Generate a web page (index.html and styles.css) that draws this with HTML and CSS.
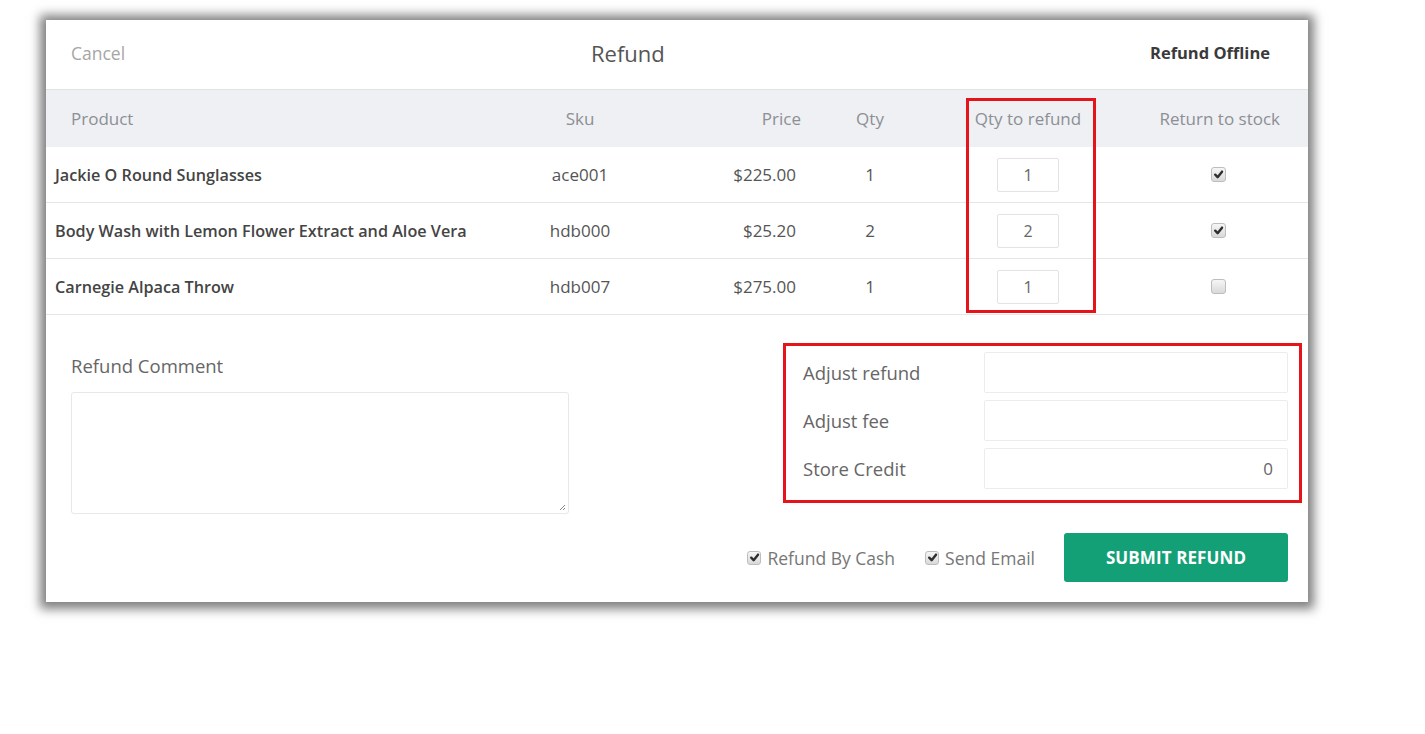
FILE: index.html
```html
<!DOCTYPE html>
<html lang="en">
<head>
<meta charset="utf-8">
<title>Refund</title>
<link rel="stylesheet" href="styles.css">
</head>
<body>
<div class="page">
  <div class="modal">
    <div class="modal-header">
      <span class="cancel">Cancel</span>
      <span class="title">Refund</span>
      <span class="offline">Refund Offline</span>
    </div>

    <div class="items">
      <div class="row head">
        <div class="c-product">Product</div>
        <div class="c-sku">Sku</div>
        <div class="c-price">Price</div>
        <div class="c-qty">Qty</div>
        <div class="c-refund">Qty to refund</div>
        <div class="c-stock">Return to stock</div>
      </div>
      <div class="row">
        <div class="c-product name">Jackie O Round Sunglasses</div>
        <div class="c-sku">ace001</div>
        <div class="c-price">$225.00</div>
        <div class="c-qty">1</div>
        <div class="c-refund"><span class="qty-input">1</span></div>
        <div class="c-stock"><span class="check on"><svg viewBox="0 0 10 10"><path d="M2 5.2 L4.2 7.4 L8.2 2.4"/></svg></span></div>
      </div>
      <div class="row">
        <div class="c-product name">Body Wash with Lemon Flower Extract and Aloe Vera</div>
        <div class="c-sku">hdb000</div>
        <div class="c-price">$25.20</div>
        <div class="c-qty">2</div>
        <div class="c-refund"><span class="qty-input">2</span></div>
        <div class="c-stock"><span class="check on"><svg viewBox="0 0 10 10"><path d="M2 5.2 L4.2 7.4 L8.2 2.4"/></svg></span></div>
      </div>
      <div class="row">
        <div class="c-product name">Carnegie Alpaca Throw</div>
        <div class="c-sku">hdb007</div>
        <div class="c-price">$275.00</div>
        <div class="c-qty">1</div>
        <div class="c-refund"><span class="qty-input">1</span></div>
        <div class="c-stock"><span class="check"></span></div>
      </div>
      <div class="highlight hl-qty"></div>
    </div>

    <div class="bottom">
      <div class="comment">
        <div class="comment-label">Refund Comment</div>
        <div class="textarea"><svg class="grip" viewBox="0 0 8 8"><path d="M7 2 L2 7 M7 5 L5 7"/></svg></div>
      </div>
      <div class="summary">
        <div class="adjust">
          <div class="adj-label">Adjust refund</div>
          <div class="adj-input"></div>
          <div class="adj-label">Adjust fee</div>
          <div class="adj-input"></div>
          <div class="adj-label">Store Credit</div>
          <div class="adj-input">0</div>
          <div class="highlight hl-adjust"></div>
        </div>
        <div class="actions">
          <span class="opt"><span class="check small on"><svg viewBox="0 0 10 10"><path d="M2 5.2 L4.2 7.4 L8.2 2.4"/></svg></span>Refund By Cash</span>
          <span class="opt"><span class="check small on"><svg viewBox="0 0 10 10"><path d="M2 5.2 L4.2 7.4 L8.2 2.4"/></svg></span>Send Email</span>
          <button class="submit">SUBMIT REFUND</button>
        </div>
      </div>
    </div>
  </div>
</div>
</body>
</html>
```

FILE: styles.css
```css
* { box-sizing: border-box; }

html, body {
  margin: 0;
  background: #ffffff;
}

body {
  font-family: "Open Sans", "Noto Sans", "Liberation Sans", sans-serif;
  color: #555;
  min-height: 734px;
}

.page {
  padding: 20px 0 60px 46px;
}

.modal {
  width: 1262px;
  height: 582px;
  background: #fff;
  box-shadow: 0 1px 10px 6px rgba(0, 0, 0, 0.5);
}

/* header */
.modal-header {
  height: 70px;
  display: flex;
  align-items: center;
  padding: 0 38px 4px 25px;
  border-bottom: 1px solid #e2e2e2;
}

.cancel {
  width: 520px;
  font-size: 17.5px;
  color: #a6a6a6;
}

.title {
  font-size: 22px;
  color: #555;
}

.offline {
  margin-left: auto;
  font-size: 16.5px;
  font-weight: 700;
  color: #3a3a3a;
}

/* table */
.items {
  position: relative;
}

.row {
  display: grid;
  grid-template-columns: 454px 160px 160px 100px 200px 188px;
  height: 56px;
  align-items: center;
  border-bottom: 1px solid #e6e6e6;
  font-size: 17px;
  color: #555;
}

.row.head {
  height: 57px;
  background: #eff0f3;
  border-bottom: none;
  font-size: 17px;
  color: #8c8f94;
}

.c-product { padding-left: 9px; white-space: nowrap; }
.head .c-product { padding-left: 25px; }
.name {
  font-weight: 600;
  color: #444;
  font-size: 16.2px;
}
.c-sku { text-align: center; white-space: nowrap; }
.c-price { text-align: right; padding-right: 24px; white-space: nowrap; }
.head .c-price { padding-right: 19px; }
.c-qty { text-align: center; }
.c-refund {
  display: flex;
  justify-content: center;
  padding-left: 16px;
  white-space: nowrap;
}
.c-stock {
  display: flex;
  justify-content: center;
  padding-left: 8px;
}
.head .c-stock {
  justify-content: flex-end;
  padding-right: 28px;
  white-space: nowrap;
}

.qty-input {
  width: 62px;
  height: 34px;
  border: 1px solid #e3e3e3;
  border-radius: 2px;
  display: flex;
  align-items: center;
  justify-content: center;
  font-size: 16px;
  color: #666;
}

.check {
  width: 15px;
  height: 15px;
  border: 1px solid #bdbdbd;
  border-radius: 3px;
  background: linear-gradient(#f6f6f6, #d9d9d9);
  display: inline-flex;
  align-items: center;
  justify-content: center;
}
.check svg {
  width: 11px;
  height: 11px;
  fill: none;
  stroke: #2f2f2f;
  stroke-width: 2.2;
  stroke-linecap: round;
  stroke-linejoin: round;
}
.check.small {
  width: 14px;
  height: 14px;
}

.highlight {
  position: absolute;
  border: 3px solid #e4141a;
  pointer-events: none;
}
.hl-qty {
  left: 920px;
  top: 8px;
  width: 130px;
  height: 215px;
}

/* bottom */
.bottom {
  display: flex;
  justify-content: space-between;
  padding: 37px 20px 0 25px;
}

.comment {
  width: 498px;
  padding-top: 2px;
}

.comment-label {
  font-size: 18.5px;
  color: #666;
  line-height: 24px;
}

.textarea {
  margin-top: 14px;
  height: 122px;
  border: 1px solid #e8e8e8;
  border-radius: 3px;
  position: relative;
}
.grip {
  position: absolute;
  right: 2px;
  bottom: 2px;
  width: 8px;
  height: 8px;
  fill: none;
  stroke: #888;
  stroke-width: 1;
}

.summary {
  display: flex;
  flex-direction: column;
  align-items: flex-end;
}

.adjust {
  position: relative;
  width: 485px;
  display: grid;
  grid-template-columns: 181px 304px;
  row-gap: 7px;
  align-items: center;
}

.adj-label {
  font-size: 18.5px;
  color: #666;
}

.adj-input {
  height: 41px;
  border: 1px solid #ececec;
  border-radius: 2px;
  display: flex;
  align-items: center;
  justify-content: flex-end;
  padding-right: 14px;
  font-size: 17px;
  color: #666;
}

.hl-adjust {
  top: -9px;
  left: -20px;
  right: -14px;
  bottom: -14px;
}

.actions {
  margin-top: 44px;
  display: flex;
  align-items: center;
}

.opt {
  display: inline-flex;
  align-items: center;
  gap: 6px;
  font-size: 17.5px;
  color: #777;
  margin-right: 30px;
}
.opt + .opt { margin-right: 29px; }

.submit {
  width: 224px;
  height: 49px;
  border: none;
  border-radius: 3px;
  background: #14a077;
  color: #fff;
  font-family: inherit;
  font-size: 17px;
  font-weight: 700;
  letter-spacing: 0.1px;
}
```
